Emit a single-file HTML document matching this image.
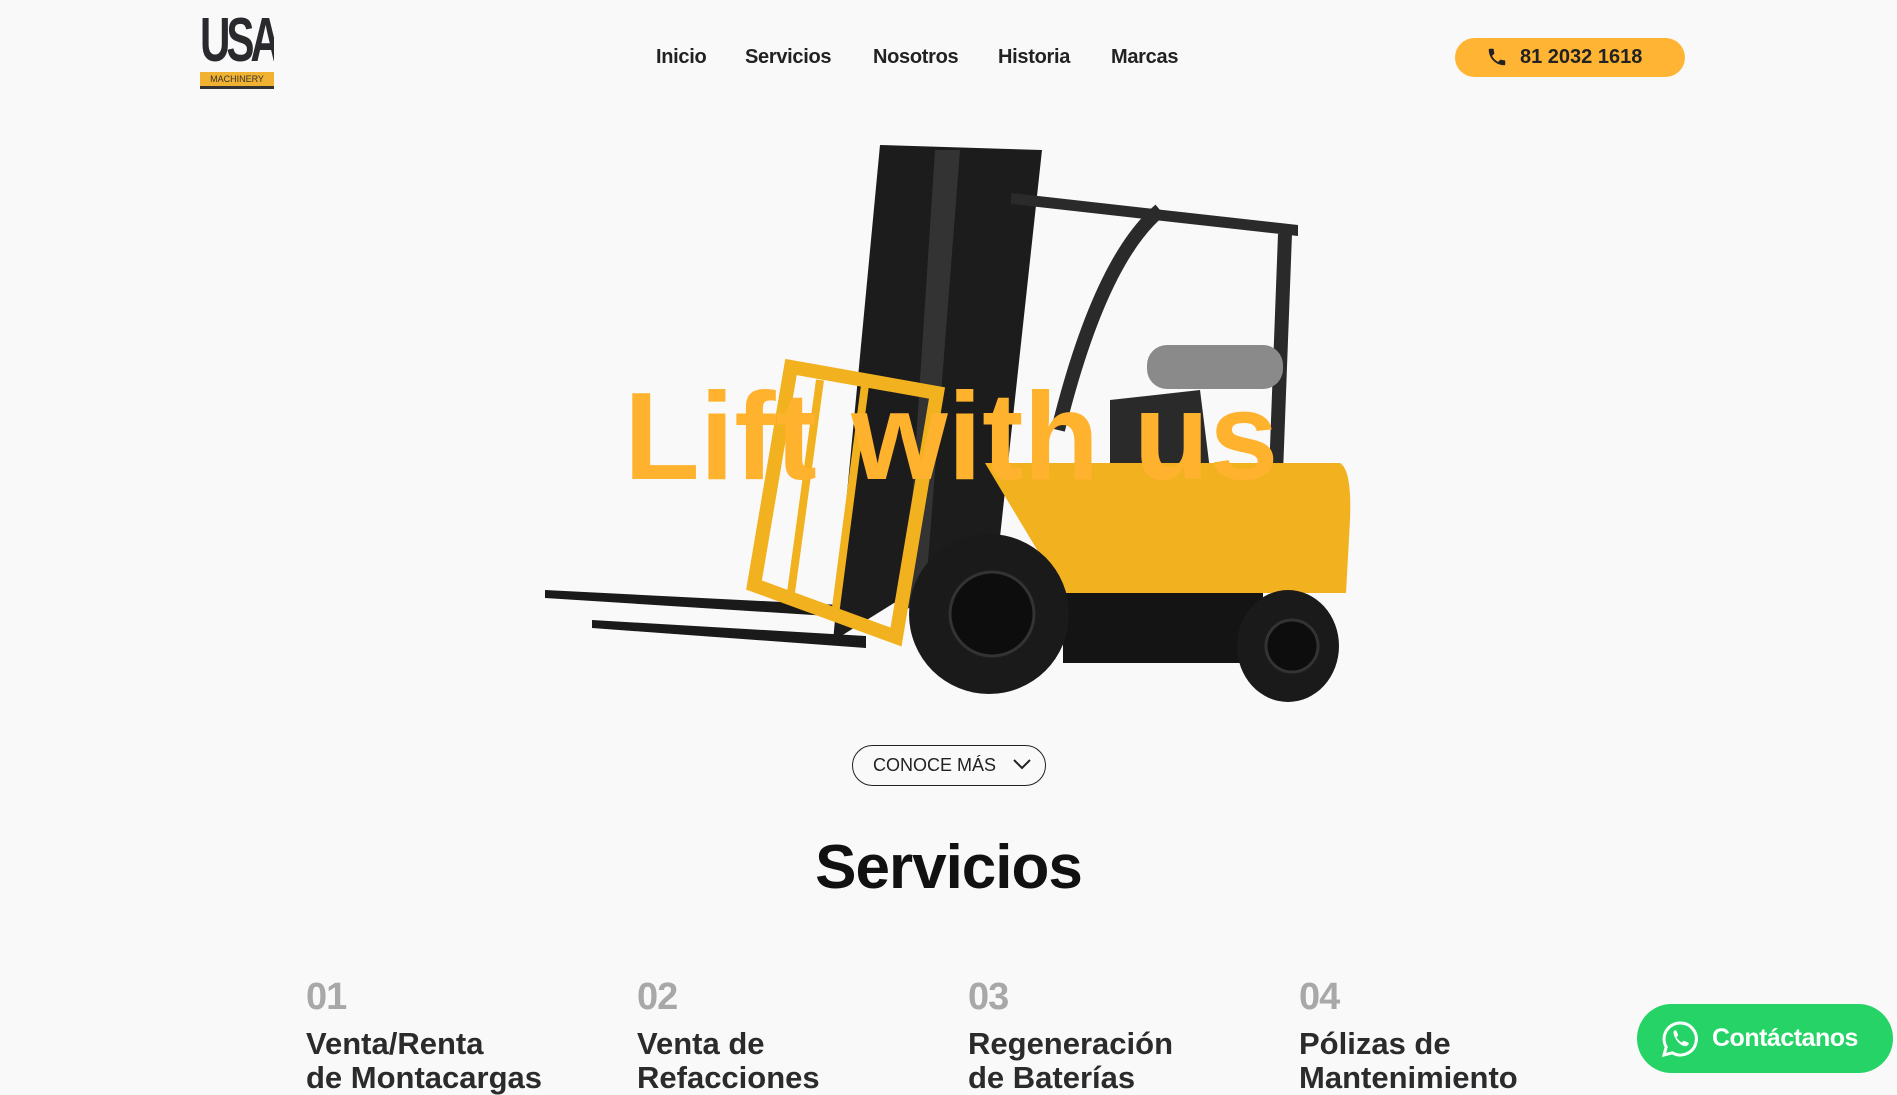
<!DOCTYPE html>
<html><head><meta charset="utf-8"><style>
*{margin:0;padding:0;box-sizing:border-box}
body{width:1897px;height:1076px;overflow:hidden;background:#f9f9f9;font-family:"Liberation Sans",sans-serif;position:relative;color:#222}
.a{position:absolute}
nav a{position:absolute;top:46px;font-size:20px;font-weight:bold;color:#222;text-decoration:none;letter-spacing:-0.3px}
.num{position:absolute;top:976px;font-size:38px;color:#a8a8a8;font-weight:bold;letter-spacing:-1px}
.tt{position:absolute;top:1027px;font-size:31px;font-weight:bold;color:#2b2b2b;line-height:34px;letter-spacing:0px}
</style></head><body>
<div class="a" style="left:200px;top:12px;width:74px;height:78px;overflow:hidden">
<div style="font:bold 62px/58px 'Liberation Sans',sans-serif;color:#2a2a2e;letter-spacing:-6px;transform:scaleX(0.68);transform-origin:left;white-space:nowrap">USA</div>
<div style="background:#f2b231;height:14px;margin-top:2px;font-size:9px;color:#333;text-align:center;line-height:14px">MACHINERY</div>
<div style="background:#333;height:3px"></div>
</div>
<nav><a style="left:656px">Inicio</a><a style="left:745px">Servicios</a><a style="left:873px">Nosotros</a><a style="left:998px">Historia</a><a style="left:1111px">Marcas</a></nav>
<div class="a" style="left:1455px;top:38px;width:230px;height:39px;background:#ffb533;border-radius:20px;font-size:20px;font-weight:bold;color:#222;line-height:39px;padding-left:65px">81 2032 1618</div>
<svg class="a" style="left:1486px;top:46px" width="22" height="22" viewBox="0 0 24 24"><path fill="#222" d="M6.6 10.8c1.4 2.8 3.800 5.1 6.6 6.6l2.2-2.2c.3-.3.7-.4 1-.2 1.1.4 2.3.6 3.6.6.6 0 1 .4 1 1V20c0 .6-.4 1-1 1C10.6 21 3 13.4 3 4c0-.6.4-1 1-1h3.5c.6 0 1 .4 1 1 0 1.3.2 2.5.6 3.6.1.3 0 .7-.2 1z"/></svg>

<svg class="a" style="left:0;top:0" width="1897" height="1076" viewBox="0 0 1897 1076">
<polygon points="545,590 860,606 860,618 545,598" fill="#1a1a1a"/>
<polygon points="592,620 866,636 866,648 592,628" fill="#1a1a1a"/>
<polygon points="880,145 1042,150 1000,537 833,641" fill="#1c1c1c"/>
<polygon points="935,150 960,150 925,600 905,610" fill="#333"/>
<polygon points="1011,193 1298,225 1298,236 1011,204" fill="#2a2a2a"/>
<polygon points="1278,234 1292,234 1282,500 1268,500" fill="#2a2a2a"/>
<path d="M1160,210 Q1100,260 1058,430" stroke="#2a2a2a" stroke-width="14" fill="none"/>
<rect x="1147" y="345" width="136" height="44" rx="20" fill="#8a8a8a"/>
<polygon points="1110,400 1200,390 1210,470 1110,470" fill="#2a2a2a"/>
<path d="M985,463 L1340,463 Q1352,470 1350,520 L1346,593 L1063,593 Z" fill="#f2b21f"/>
<rect x="1063" y="593" width="200" height="70" fill="#141414"/>
<polygon points="791,367 937,393 896,637 754,585" fill="none" stroke="#f2b21f" stroke-width="14"/>
<line x1="820" y1="380" x2="790" y2="600" stroke="#f2b21f" stroke-width="8"/>
<line x1="865" y1="385" x2="835" y2="615" stroke="#f2b21f" stroke-width="8"/>
<circle cx="989" cy="614" r="80" fill="#1a1a1a"/><circle cx="992" cy="614" r="42" fill="#0d0d0d" stroke="#333" stroke-width="3"/>
<ellipse cx="1288" cy="646" rx="51" ry="56" fill="#1a1a1a"/><circle cx="1292" cy="646" r="26" fill="#0d0d0d" stroke="#333" stroke-width="3"/>
</svg>
<div class="a" style="left:624px;top:372px;font-size:124px;font-weight:bold;color:#ffb22e;letter-spacing:0px;line-height:130px;white-space:nowrap">Lift with us</div>

<div class="a" style="left:852px;top:745px;width:194px;height:41px;border:1.5px solid #222;border-radius:21px;font-size:18px;line-height:38px;padding-left:20px;color:#222">CONOCE MÁS</div>
<svg class="a" style="left:1012px;top:756px" width="20" height="16" viewBox="0 0 20 16"><path d="M2 4l8 8 8-8" stroke="#222" stroke-width="2" fill="none"/></svg>

<div class="a" style="left:0;width:1897px;top:832px;text-align:center;font-size:62px;font-weight:bold;color:#111;letter-spacing:-1px">Servicios</div>

<div class="num" style="left:306px">01</div><div class="num" style="left:637px">02</div><div class="num" style="left:968px">03</div><div class="num" style="left:1299px">04</div>
<div class="tt" style="left:306px">Venta/Renta<br>de Montacargas</div>
<div class="tt" style="left:637px">Venta de<br>Refacciones</div>
<div class="tt" style="left:968px">Regeneración<br>de Baterías</div>
<div class="tt" style="left:1299px">Pólizas de<br>Mantenimiento</div>

<div class="a" style="left:1637px;top:1004px;width:256px;height:69px;background:#25d366;border-radius:35px;color:#fff;font-size:25px;font-weight:bold;line-height:69px;padding-left:75px;letter-spacing:-0.5px">Contáctanos</div>
<svg class="a" style="left:1660px;top:1019px" width="40" height="40" viewBox="0 0 40 40"><path d="M20 4a16 16 0 0 0-13.8 24L4 36l8.3-2.2A16 16 0 1 0 20 4z" fill="none" stroke="#fff" stroke-width="3"/><path d="M14 12c1-1 2-1 2.5 0l1.5 3.5c.3.6 0 1.2-.5 1.700l-1 1c1 2 3 4 5.300 5.300l1-1c.5-.5 1.100-.8 1.700-.5l3.5 1.5c1 .5 1 1.5 0 2.5-2 2-5 1.5-8.5-1.5S12 14 14 12z" fill="#fff"/></svg>
</body></html>
